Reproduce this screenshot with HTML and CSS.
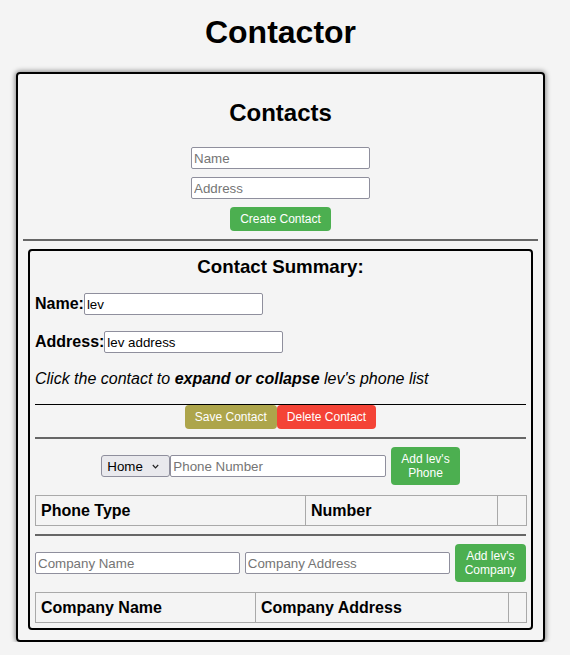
FILE: index.html
```html
<!DOCTYPE html>
<html>
<head>
<meta charset="utf-8">
<link rel="stylesheet" href="styles.css">
</head>
<body>
<div class="page">
  <h1 class="title">Contactor</h1>
  <div class="outer">
    <h2 class="contacts-title">Contacts</h2>
    <div class="create-form">
      <input class="field" type="text" placeholder="Name">
      <input class="field" type="text" placeholder="Address">
      <button class="btn btn-green">Create Contact</button>
    </div>
    <hr class="rule">
    <div class="summary">
      <h3 class="summary-title">Contact Summary:</h3>
      <div class="kv kv-first">
        <label class="kv-label">Name:</label><input class="field" type="text" value="lev">
      </div>
      <div class="kv">
        <label class="kv-label">Address:</label><input class="field" type="text" value="lev address">
      </div>
      <p class="hint">Click the contact to <b>expand or collapse</b> lev's phone list</p>
      <hr class="rule-black">
      <div class="actions">
        <button class="btn btn-olive">Save Contact</button><button class="btn btn-red">Delete Contact</button>
      </div>
      <hr class="rule">
      <div class="phone-row">
        <div class="select-wrap">
          <select class="select"><option>Home</option><option>Work</option><option>Mobile</option></select>
          <svg class="chevron" width="7" height="5" viewBox="0 0 7 5"><path d="M0.8 1 L3.5 3.8 L6.2 1" fill="none" stroke="#222" stroke-width="1.2"/></svg>
        </div><input class="field phone-field" type="text" placeholder="Phone Number"><button class="btn btn-green btn-two">Add lev's<br>Phone</button>
      </div>
      <table class="grid">
        <colgroup><col class="c-pt"><col class="c-num"><col class="c-x1"></colgroup>
        <tr><th>Phone Type</th><th>Number</th><th></th></tr>
      </table>
      <hr class="rule">
      <div class="company-row">
        <input class="field company-field" type="text" placeholder="Company Name">
        <input class="field company-field" type="text" placeholder="Company Address">
        <button class="btn btn-green btn-two">Add lev's<br>Company</button>
      </div>
      <table class="grid">
        <colgroup><col class="c-cn"><col class="c-ca"><col class="c-x2"></colgroup>
        <tr><th>Company Name</th><th>Company Address</th><th></th></tr>
      </table>
    </div>
  </div>
</div>
</body>
</html>
```

FILE: styles.css
```css
html, body {
  margin: 0;
  padding: 0;
  background: #f4f4f4;
  font-family: "Liberation Sans", Arial, sans-serif;
  color: #000;
}

.page {
  width: 561px;
  padding: 14px 16px 0 16px;
  box-sizing: border-box;
}

.title {
  margin: 0;
  font-size: 32px;
  line-height: 37px;
  text-align: center;
  font-weight: bold;
}

.outer {
  margin-top: 21px;
  border: 2px solid #000;
  border-radius: 4px;
  padding: 5px;
  box-shadow: 0 0 5px 1px rgba(0, 0, 0, 0.45);
}

.contacts-title {
  margin: 20px 0;
  font-size: 24px;
  line-height: 28px;
  text-align: center;
}

.create-form {
  display: flex;
  flex-direction: column;
  align-items: center;
  gap: 8px;
}

.field {
  box-sizing: border-box;
  width: 179px;
  height: 22px;
  margin: 0;
  padding: 1px 2px;
  border: 1px solid #8f8f9d;
  border-radius: 2px;
  background: #fff;
  font-family: "Liberation Sans", Arial, sans-serif;
  font-size: 13.33px;
  color: #000;
}

.field::placeholder {
  color: #757575;
}

.btn {
  border: none;
  border-radius: 4px;
  color: #fff;
  font-family: "Liberation Sans", Arial, sans-serif;
  font-size: 12px;
  line-height: 14px;
  padding: 5px 10px;
  margin: 0;
  cursor: pointer;
}

.btn-green { background: #4caf50; }
.btn-olive { background: #ada54b; }
.btn-red { background: #f44336; }

.rule {
  margin: 8px 0;
  border: none;
  border-top: 2px solid #666;
  height: 0;
}

.summary {
  margin: 0 5px 5px 5px;
  border: 2px solid #000;
  border-radius: 4px;
  padding: 5px;
}

.summary-title {
  margin: 0;
  font-size: 18.72px;
  line-height: 22px;
  text-align: center;
}

.kv {
  display: flex;
  align-items: center;
  height: 22px;
  margin-top: 16px;
}

.kv-first {
  margin-top: 15px;
}

.kv-label {
  font-weight: bold;
  font-size: 16px;
  line-height: 18px;
}

.hint {
  margin: 16px 0 0 0;
  font-size: 16px;
  line-height: 19px;
  font-style: italic;
}

.rule-black {
  margin: 16px 0 0 0;
  border: none;
  border-top: 1px solid #000;
  height: 0;
}

.actions {
  display: flex;
  justify-content: center;
}

.phone-row {
  display: flex;
  justify-content: center;
  align-items: center;
}

.select-wrap {
  position: relative;
  width: 69px;
  height: 22px;
}

.select {
  -webkit-appearance: none;
  appearance: none;
  box-sizing: border-box;
  width: 69px;
  height: 22px;
  margin: 0;
  padding: 0 0 0 5px;
  border: 1px solid #8f8f9d;
  border-radius: 3px;
  background: #e9e9ed;
  color: #000;
  font-family: "Liberation Sans", Arial, sans-serif;
  font-size: 13.33px;
}

.chevron {
  position: absolute;
  right: 11px;
  top: 9px;
  pointer-events: none;
}

.phone-field {
  width: 216px;
}

.phone-row .btn {
  margin-left: 5px;
}

.company-row {
  display: flex;
  align-items: center;
  gap: 5px;
}

.company-field {
  flex: 1;
  width: auto;
  min-width: 0;
}

.grid {
  width: 100%;
  margin-top: 10px;
  border-collapse: collapse;
  table-layout: fixed;
}

.grid th {
  border: 1px solid #a9a9a9;
  padding: 5px;
  font-size: 16px;
  line-height: 19px;
  text-align: left;
  font-weight: bold;
}

.c-pt { width: 270px; }
.c-num { width: 192px; }
.c-x1 { width: 29px; }
.c-cn { width: 220px; }
.c-ca { width: 253px; }
.c-x2 { width: 18px; }
```
